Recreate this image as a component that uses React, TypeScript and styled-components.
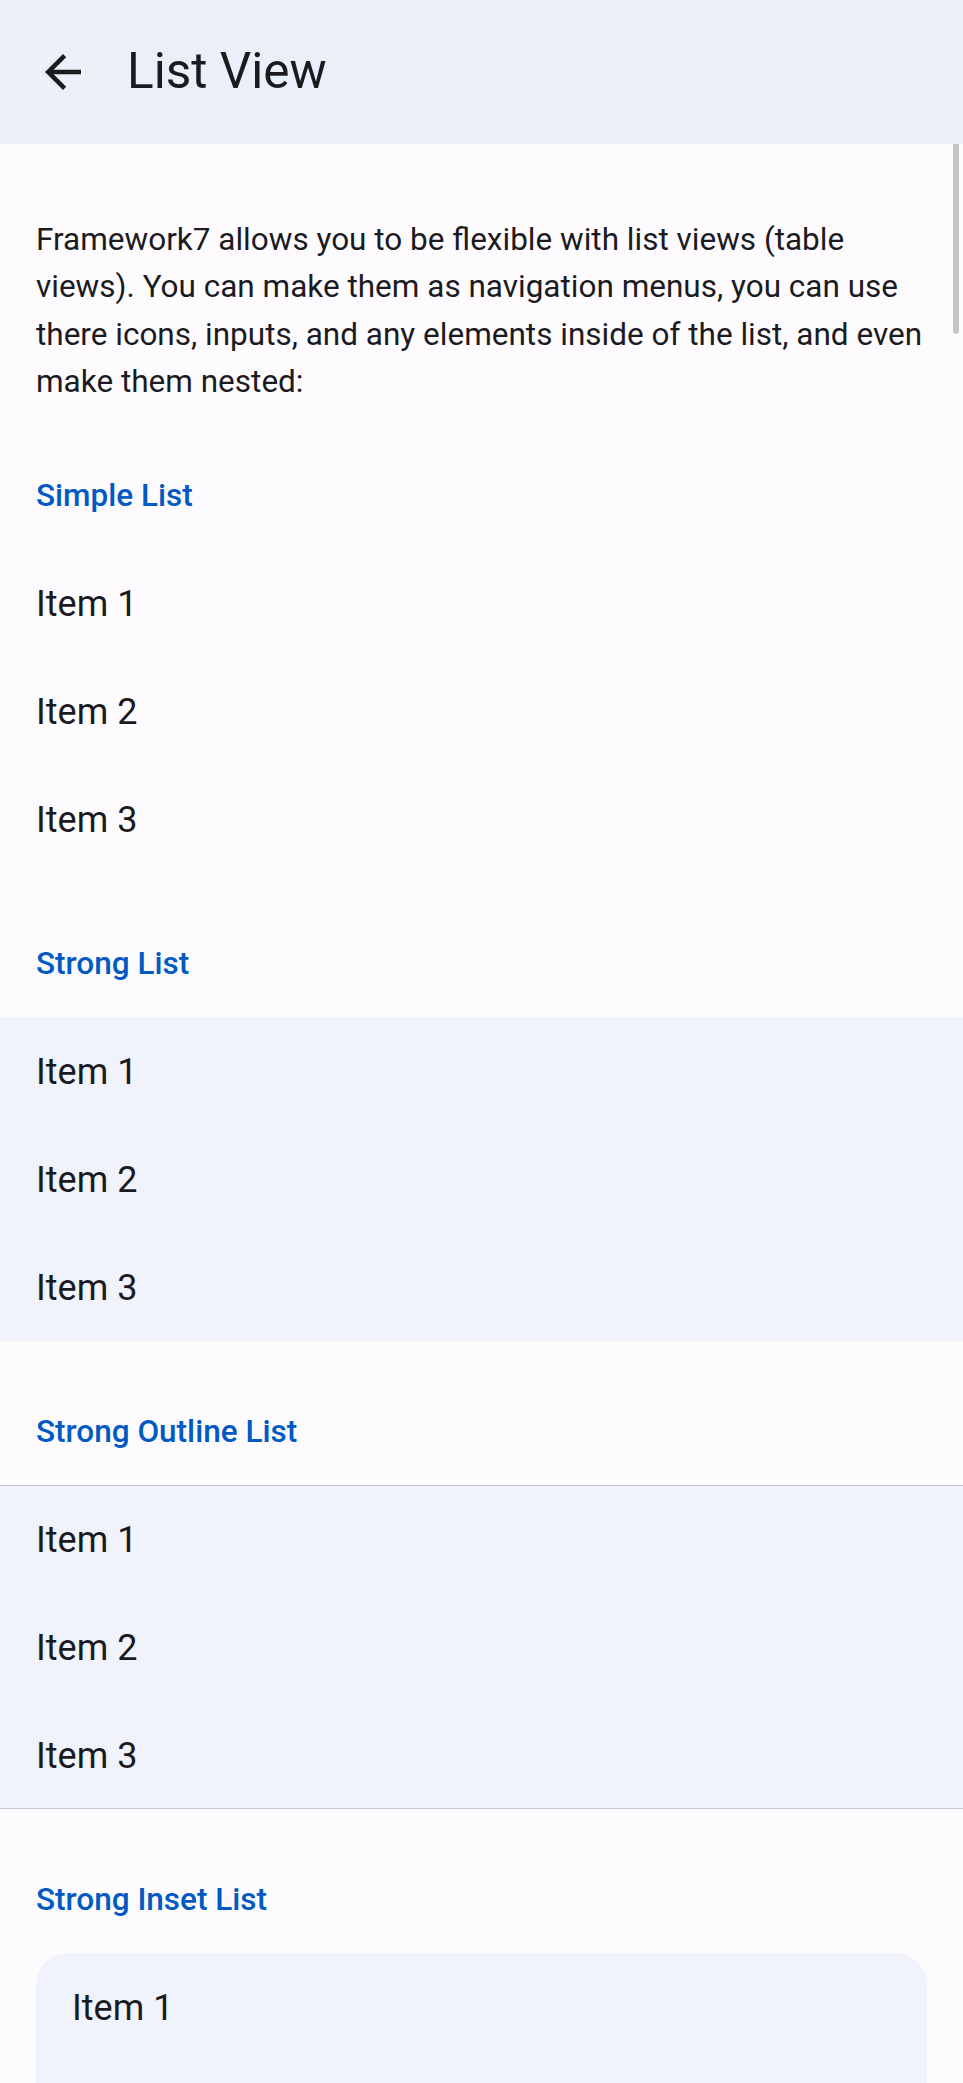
import React from "react";
import styled, { createGlobalStyle } from "styled-components";

const Global = createGlobalStyle`
  html, body { margin: 0; padding: 0; overflow: hidden; background: #fefbff; }
  * { box-sizing: border-box; }
  body { font-family: Roboto, "Noto Sans", "Liberation Sans", sans-serif; color: #1b1b1f; }
`;

const Screen = styled.div`
  height: 100vh;
  display: flex;
  flex-direction: column;
  background: #fefbff;
  overflow: hidden;
`;

const Navbar = styled.header`
  flex: 0 0 144px;
  height: 144px;
  background: #ebeff9;
  display: flex;
  align-items: center;
  padding-left: 36px;
  gap: 37px;
`;

const BackButton = styled.button`
  width: 54px;
  height: 54px;
  padding: 0;
  border: 0;
  background: transparent;
  display: flex;
  align-items: center;
  justify-content: center;
  color: #1b1b1f;
  svg { width: 54px; height: 54px; display: block; }
`;

const Title = styled.h1`
  margin: 0;
  font-size: 49.5px;
  font-weight: 400;
  line-height: 1;
  color: #1b1b1f;
  letter-spacing: 0;
`;

const PageContent = styled.main`
  flex: 1;
  position: relative;
  overflow: hidden;
  padding-bottom: 72px;
`;

const ScrollThumb = styled.div`
  position: absolute;
  top: 0;
  right: 4px;
  width: 6px;
  height: 190px;
  background: #c6c6c8;
  border-radius: 0 0 3px 3px;
`;

const Block = styled.div`
  margin: 72px 0;
  padding: 0 36px;
  font-size: 31.5px;
  line-height: 47.25px;
  color: #1b1b1f;
  p { margin: 0; }
`;

const BlockTitle = styled.div`
  margin: 72px 0 36px;
  padding: 1px 36px 0;
  height: 36px;
  font-size: 31.5px;
  line-height: 36px;
  font-weight: 500;
  color: #005ac1;
  white-space: nowrap;
`;

type Variant = "simple" | "strong" | "outline" | "inset";

const List = styled.ul<{ $variant: Variant }>`
  list-style: none;
  margin: ${(p) => (p.$variant === "inset" ? "0 36px" : "0")};
  padding: 0;
  background: ${(p) => (p.$variant === "simple" ? "transparent" : "#f0f3fc")};
  border-radius: ${(p) => (p.$variant === "inset" ? "32px" : "0")};
  box-shadow: ${(p) =>
    p.$variant === "outline"
      ? "inset 0 1px 0 #c4c6d0, inset 0 -1px 0 #c4c6d0"
      : "none"};
  overflow: hidden;
`;

const Item = styled.li`
  height: 108px;
  display: flex;
  align-items: center;
  padding: 3px 0 0 36px;
  font-size: 36px;
  line-height: 1.2;
  color: #1b1b1f;
`;

const ArrowBack = () => (
  <svg viewBox="0 0 24 24" aria-hidden="true">
    <path
      fill="currentColor"
      d="M20 11H7.83l5.59-5.59L12 4l-8 8 8 8 1.41-1.41L7.83 13H20v-2z"
    />
  </svg>
);

const sections: { title: string; variant: Variant }[] = [
  { title: "Simple List", variant: "simple" },
  { title: "Strong List", variant: "strong" },
  { title: "Strong Outline List", variant: "outline" },
  { title: "Strong Inset List", variant: "inset" },
];

const items = ["Item 1", "Item 2", "Item 3"];

export default function App() {
  return (
    <>
      <Global />
      <Screen>
        <Navbar>
          <BackButton aria-label="Back">
            <ArrowBack />
          </BackButton>
          <Title>List View</Title>
        </Navbar>
        <PageContent>
          <ScrollThumb />
          <Block>
            <p>
              Framework7 allows you to be flexible with list views (table
              views). You can make them as navigation menus, you can use there
              icons, inputs, and any elements inside of the list, and even make
              them nested:
            </p>
          </Block>
          {sections.map((s) => (
            <section key={s.title}>
              <BlockTitle>{s.title}</BlockTitle>
              <List $variant={s.variant}>
                {items.map((it) => (
                  <Item key={it}>{it}</Item>
                ))}
              </List>
            </section>
          ))}
        </PageContent>
      </Screen>
    </>
  );
}
